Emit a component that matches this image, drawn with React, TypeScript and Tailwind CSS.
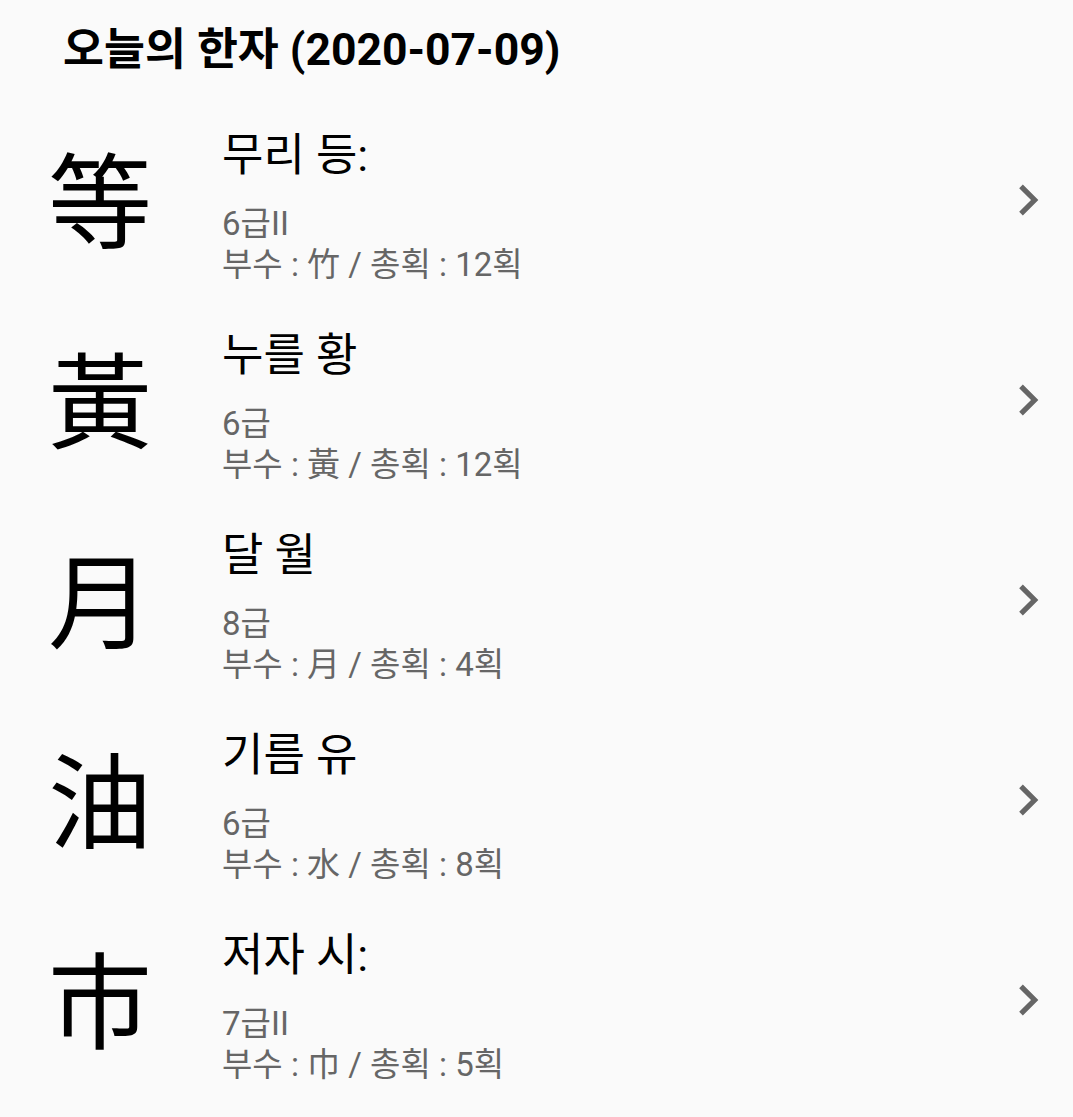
const items = [
	{ han: "等", name: "무리 등:", grade: "6급II", radical: "竹", strokes: 12 },
	{ han: "黃", name: "누를 황", grade: "6급", radical: "黃", strokes: 12 },
	{ han: "月", name: "달 월", grade: "8급", radical: "月", strokes: 4 },
	{ han: "油", name: "기름 유", grade: "6급", radical: "水", strokes: 8 },
	{ han: "市", name: "저자 시:", grade: "7급II", radical: "巾", strokes: 5 },
];

const font = { fontFamily: 'Roboto, "Noto Sans CJK KR", sans-serif' };

function Chevron() {
	return (
		<svg viewBox="0 0 24 24" className="w-[62px] h-[62px] fill-[#666666]">
			<path d="M10 6L8.59 7.41 13.17 12l-4.58 4.59L10 18l6-6z" />
		</svg>
	);
}

export default function App() {
	return (
		<div className="bg-[#fafafa] w-[1073px] h-[1117px] overflow-hidden" style={font}>
			<div className="h-[100px] pl-[63px] pt-[20px]">
				<h1 className="font-bold text-[44.5px] leading-[60px] text-black">
					오늘의 한자 (2020-07-09)
				</h1>
			</div>
			{items.map((item) => (
				<div key={item.han} className="flex items-center h-[200px] pr-[14px]">
					<div className="w-[222px] pl-[48px] pt-[12px] text-[104px] leading-none text-black">
						{item.han}
					</div>
					<div className="flex-1 flex flex-col pt-[14px]">
						<div className="text-[45px] leading-[52px] text-black">{item.name}</div>
						<div className="mt-[21px] text-[33px] leading-[41px] text-[#666666]">
							{item.grade}
						</div>
						<div className="text-[33px] leading-[41px] text-[#666666]">
							부수 : {item.radical} / 총획 : {item.strokes}획
						</div>
					</div>
					<Chevron />
				</div>
			))}
		</div>
	);
}
